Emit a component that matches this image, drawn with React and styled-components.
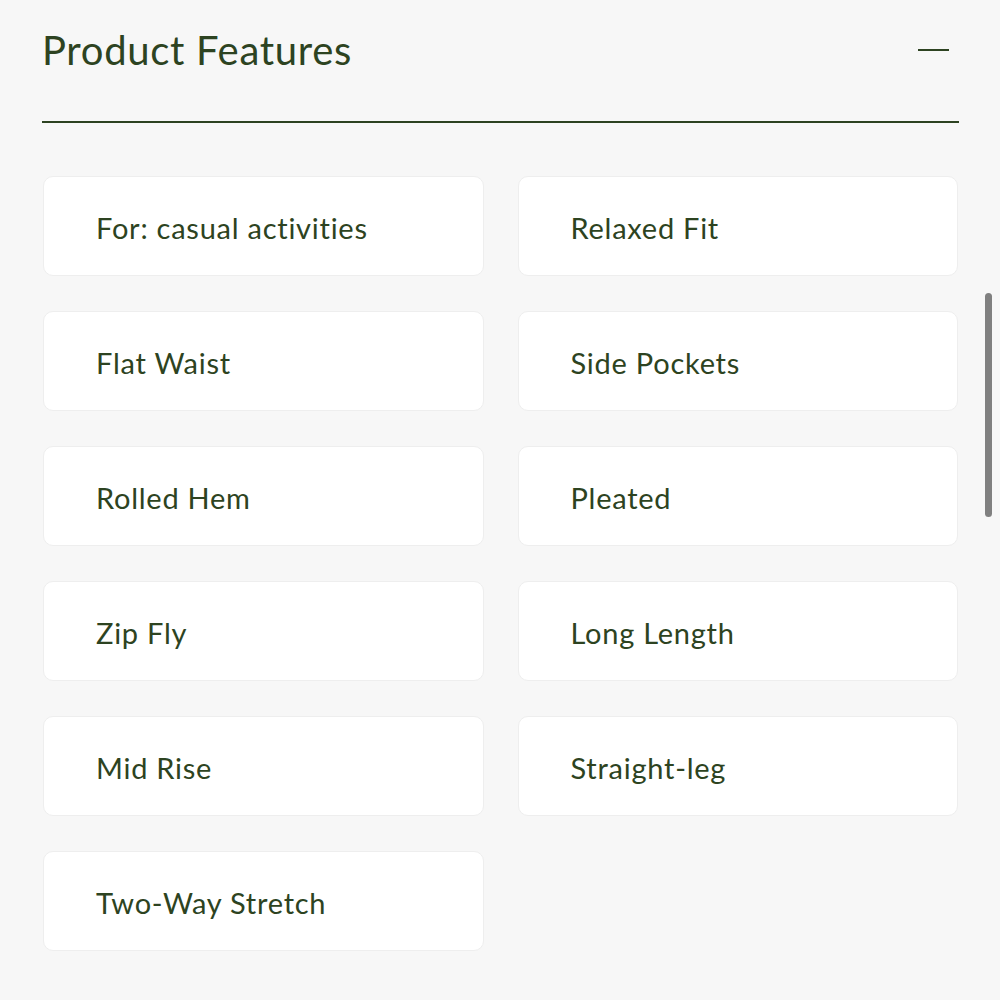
import React from 'react';
import styled, { createGlobalStyle } from "styled-components";

const GlobalStyle = createGlobalStyle`
html, body {
    margin:0;
    padding:0;
    background-color:#f7f7f7;
}
body {
    font-family: Lato, "Open Sans", sans-serif;
}
`;

const Page = styled.div`
position:relative;
width:1000px;
height:1000px;
overflow:hidden;
background-color:#f7f7f7;
`;

const Section = styled.section`
display:flex;
flex-direction:column;
margin-left:42px;
width:917px;
`;

const Header = styled.div`
display:flex;
align-items:center;
justify-content:space-between;
height:100px;
border-bottom:2px solid #2d4321;
padding-bottom:21px;
`;

const Title = styled.h2`
margin:0;
font-size:40px;
font-weight:400;
color:#2d4321;
letter-spacing:0.7px;
`;

const Collapse = styled.button`
display:flex;
align-items:center;
justify-content:center;
width:40px;
height:40px;
margin-right:6px;
padding:0;
border:none;
background:none;
cursor:pointer;
`;

const Minus = styled.span`
display:block;
width:31px;
height:2.5px;
background-color:#2d4321;
`;

const Grid = styled.div`
display:grid;
grid-template-columns:1fr 1fr;
column-gap:34px;
row-gap:35px;
margin-top:53px;
padding:0 1px;
`;

const Card = styled.div`
display:flex;
align-items:center;
height:100px;
box-sizing:border-box;
padding-left:52px;
padding-top:2px;
background-color:#fff;
border:1px solid #eeeeee;
border-radius:10px;
font-size:29px;
color:#2d4321;
letter-spacing:0.75px;
`;

const Scrollbar = styled.div`
position:absolute;
top:293px;
left:985px;
width:7px;
height:224px;
border-radius:4px;
background-color:#808080;
`;

const features = [
    "For: casual activities",
    "Relaxed Fit",
    "Flat Waist",
    "Side Pockets",
    "Rolled Hem",
    "Pleated",
    "Zip Fly",
    "Long Length",
    "Mid Rise",
    "Straight-leg",
    "Two-Way Stretch",
];

const App = () => {
    return (
        <Page>
            <GlobalStyle />
            <Section>
                <Header>
                    <Title>Product Features</Title>
                    <Collapse aria-label="Collapse">
                        <Minus />
                    </Collapse>
                </Header>
                <Grid>
                    {features.map((f) => (
                        <Card key={f}>{f}</Card>
                    ))}
                </Grid>
            </Section>
            <Scrollbar />
        </Page>
    )
}

export default App;
